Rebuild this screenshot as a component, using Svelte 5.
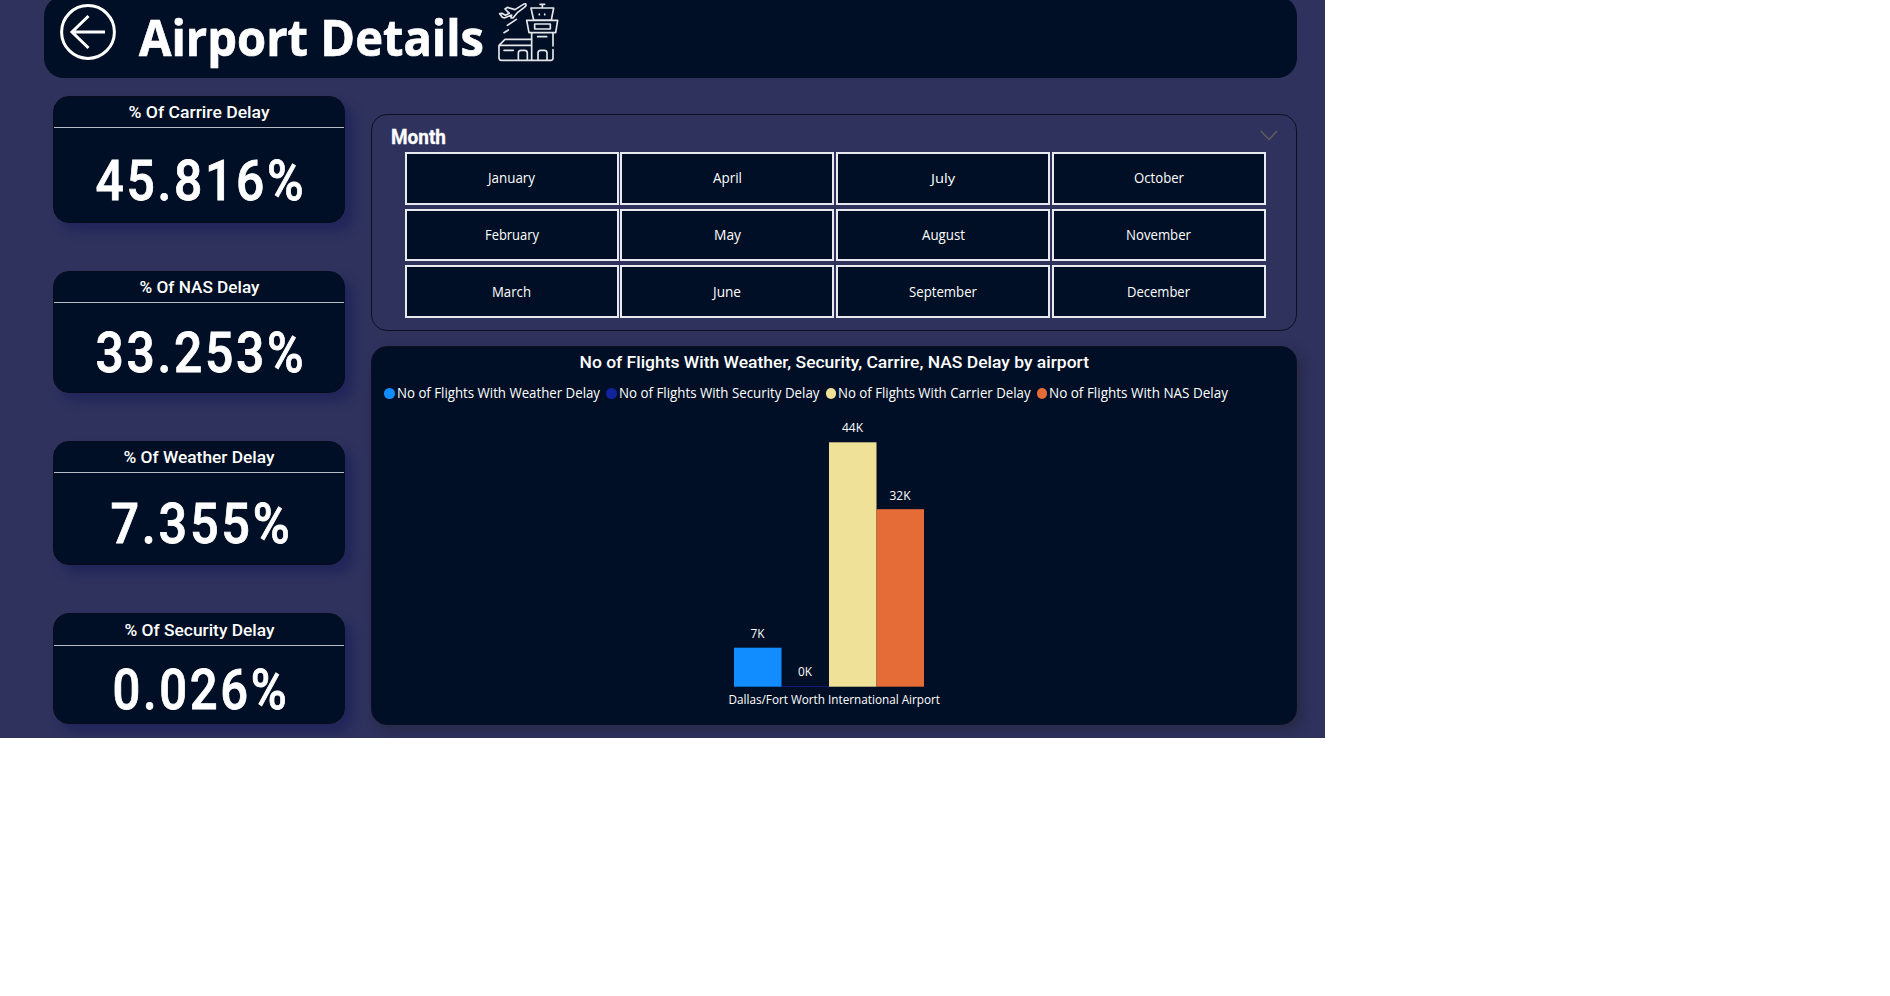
<script>
  const cards = [
    { title: '% Of Carrire Delay', tw: 141, value: '45.816%', vw: 211, h: 127.5, head: 30, base: 104, gap: 47.5 },
    { title: '% Of NAS Delay', tw: 120, value: '33.253%', vw: 211, h: 122.5, head: 30, base: 101, gap: 47.5 },
    { title: '% Of Weather Delay', tw: 151, value: '7.355%', vw: 182, h: 124.5, head: 30, base: 102, gap: 48 },
    { title: '% Of Security Delay', tw: 150, value: '0.026%', vw: 177, h: 111, head: 31, base: 96, gap: 0 }
  ];
  const months = [
    ['January', 47], ['April', 29], ['July', 24], ['October', 50],
    ['February', 54], ['May', 27], ['August', 43], ['November', 65],
    ['March', 39], ['June', 28], ['September', 68], ['December', 63]
  ];
  const legend = [
    { name: 'No of Flights With Weather Delay', w: 203, gap: 6.5, color: '#118dff' },
    { name: 'No of Flights With Security Delay', w: 200.5, gap: 6.5, color: '#12239e' },
    { name: 'No of Flights With Carrier Delay', w: 192.5, gap: 6, color: '#f0e199' },
    { name: 'No of Flights With NAS Delay', w: 179, gap: 0, color: '#e66c37' }
  ];
  const bars = [
    { label: '7K', w: 14, x: 362, top: 229.7, base: 220.3, color: '#118dff' },
    { label: '0K', w: 14, x: 409.5, top: 268, base: 258.3, color: '#12239e' },
    { label: '44K', w: 21, x: 457, top: 24.3, base: 14.3, color: '#f0e199' },
    { label: '32K', w: 21, x: 504.5, top: 91.2, base: 82.3, color: '#e66c37' }
  ];
  const rowBase = [29, 28.5, 29.7];
</script>

{#snippet label(text, w, h, base, cls)}
  <svg class="label {cls}" width={w} height={h} role="img" aria-label={text}>
    <text x="0" y={base} textLength={w} lengthAdjust="spacingAndGlyphs">{text}</text>
  </svg>
{/snippet}

<main class="dashboard">
  <header>
    <svg class="back" width="58" height="64" viewBox="0 0 58 64">
      <circle cx="29" cy="32" r="26.4" />
      <path d="M29.5 16 13 32l16.500 16M13 32h33" />
    </svg>
    {@render label('Airport Details', 345, 78, 56, 'title')}
    <svg class="airport" width="100" height="70" viewBox="0 0 300 210">
      <path d="M59 41 66 40 76 46 88 40 75 27 82 22 105 29 130 13Q139 8 138 17L133 22 112 38 99 54 93 54 95 45 73 54 67 52Z" />
      <path d="M109 58 82 76M85 90 72 98" />
      <path d="M180 13h14M187 14v9M153 24h68l-7 36h-53ZM140 61h93l-6 37h-80ZM164 72h47v15h-47Z" />
      <path d="M178 42v2M194 42v2" />
      <path d="M155 99v82M219 99v39M219 149v25q0 7-7 7H65q-8 0-8-8v-37l18-18h79M58 136h96M72 151h28M173 110h27" />
      <path d="M115 180v-21q0-8 8-8h11q8 0 8 8v21M174 180v-21q0-8 8-8h11q8 0 8 8v21" />
    </svg>
  </header>

  <div class="body">
    <section class="kpis">
      {#each cards as c}
        <article class="card" style="height:{c.h}px;margin-bottom:{c.gap}px">
          <div class="head" style="height:{c.head}px">{@render label(c.title, c.tw, 30, c.head - 9, 'heading')}</div>
          <div class="value">{@render label(c.value, c.vw, 60, c.base - c.head - 2, 'number')}</div>
        </article>
      {/each}
    </section>

    <section class="right">
      <div class="slicer">
        <div class="slicer-head">
          {@render label('Month', 55, 37, 29, 'month')}
          <svg width="18" height="37" viewBox="0 0 18 37"><path d="M1 16l8 8.500 8-8.500" fill="none" stroke="#605e5c" stroke-width="1.500" /></svg>
        </div>
        <div class="months">
          {#each months as m, i}
            <button>{@render label(m[0], m[1], 48, rowBase[Math.floor(i / 4)], m[0] === 'July' ? 'name short' : 'name')}</button>
          {/each}
        </div>
      </div>

      <div class="chart">
        <div class="chart-title">{@render label('No of Flights With Weather, Security, Carrire, NAS Delay by airport', 509.5, 32, 21, 'heading')}</div>
        <div class="legend">
          {#each legend as l}
            <div class="entry" style="margin-right:{l.gap}px">
              <i style="background:{l.color}"></i>
              {@render label(l.name, l.w, 32, 19, 'name')}
            </div>
          {/each}
        </div>
        <svg class="plot" width="924" height="306" viewBox="0 0 924 306">
          {#each bars as b}
            <rect x={b.x} y={b.top} width="47.500" height={268.7 - b.top} fill={b.color} />
            <text x={b.x + 23.5 - b.w / 2} y={b.base} textLength={b.w} lengthAdjust="spacingAndGlyphs">{b.label}</text>
          {/each}
          <text x="356.500" y="286.300" textLength="211.500" lengthAdjust="spacingAndGlyphs">Dallas/Fort Worth International Airport</text>
        </svg>
      </div>
    </section>
  </div>
</main>

<style>
  :global(body) {
    background: #fff;
  }
  .dashboard {
    width: 1325px;
    height: 738px;
    box-sizing: border-box;
    overflow: hidden;
    background: #2e325d;
    font-family: 'Open Sans', sans-serif;
  }
  svg {
    display: block;
    flex: none;
  }
  .label {
    overflow: visible;
    fill: #fff;
  }
  header {
    display: flex;
    width: 1253px;
    height: 82px;
    margin: -4px 0 0 44px;
    padding: 4px 0 0 15px;
    box-sizing: border-box;
    background: #000f25;
    border-radius: 20px;
  }
  .back {
    margin-right: 22px;
    fill: none;
    stroke: #fff;
    stroke-width: 3;
  }
  .title {
    font: 700 50px 'Open Sans', sans-serif;
    stroke: #fff;
    stroke-width: 0.7px;
  }
  .airport {
    margin-left: -4px;
    fill: none;
    stroke: #e4e6ea;
    stroke-width: 5;
    stroke-linecap: round;
    stroke-linejoin: round;
  }
  .body {
    display: flex;
    gap: 26px;
    padding: 17.500px 28px 0 52.500px;
  }
  .kpis {
    width: 293px;
  }
  .card {
    box-sizing: border-box;
    border: 1px solid #070b1c;
    border-radius: 16px;
    background: #000f25;
    box-shadow: 8px 8px 10px rgba(29, 33, 88, 0.7);
  }
  .head,
  .value,
  .chart-title {
    display: flex;
    justify-content: center;
  }
  .head {
    border-bottom: 1px solid #b9bdc3;
  }
  .heading {
    font: 500 17px Roboto, sans-serif;
    transform: translateX(0.500px);
  }
  .number {
    font: 500 55.500px Roboto, sans-serif;
    letter-spacing: 3px;
    stroke: #fff;
    stroke-width: 0.8px;
    transform: translateX(2.500px);
  }
  .right {
    width: 926px;
    padding-top: 18.500px;
  }
  .slicer,
  .chart {
    box-sizing: border-box;
    border: 1px solid #0c1022;
    border-radius: 16px;
  }
  .slicer {
    height: 217px;
    margin-bottom: 15px;
  }
  .slicer-head {
    display: flex;
    justify-content: space-between;
    padding: 0 18px 0 19px;
  }
  .month {
    font: 700 21px Roboto, sans-serif;
    stroke: #fff;
    stroke-width: 0.3px;
  }
  .months {
    display: grid;
    grid-template-columns: repeat(4, 214px);
    grid-auto-rows: 52.500px;
    gap: 4px 1.800px;
    padding-left: 32.500px;
  }
  button {
    display: flex;
    align-items: flex-start;
    justify-content: center;
    padding: 0;
    border: 2px solid #e8e9ee;
    background: #000f25;
  }
  .name {
    font: 400 14px 'Open Sans', sans-serif;
  }
  .short {
    font-size: 13px;
  }
  .chart {
    height: 379px;
    background: #000f25;
    box-shadow: 5px 5px 12px rgba(30, 30, 40, 0.45);
  }
  .legend {
    display: flex;
    height: 39px;
    padding-left: 12px;
  }
  .entry {
    display: flex;
  }
  i {
    width: 10.500px;
    height: 10.500px;
    margin: 9px 2px 0 0;
    border-radius: 50%;
  }
  .plot text {
    fill: #fff;
    font: 400 12.500px 'Open Sans', sans-serif;
  }
</style>
